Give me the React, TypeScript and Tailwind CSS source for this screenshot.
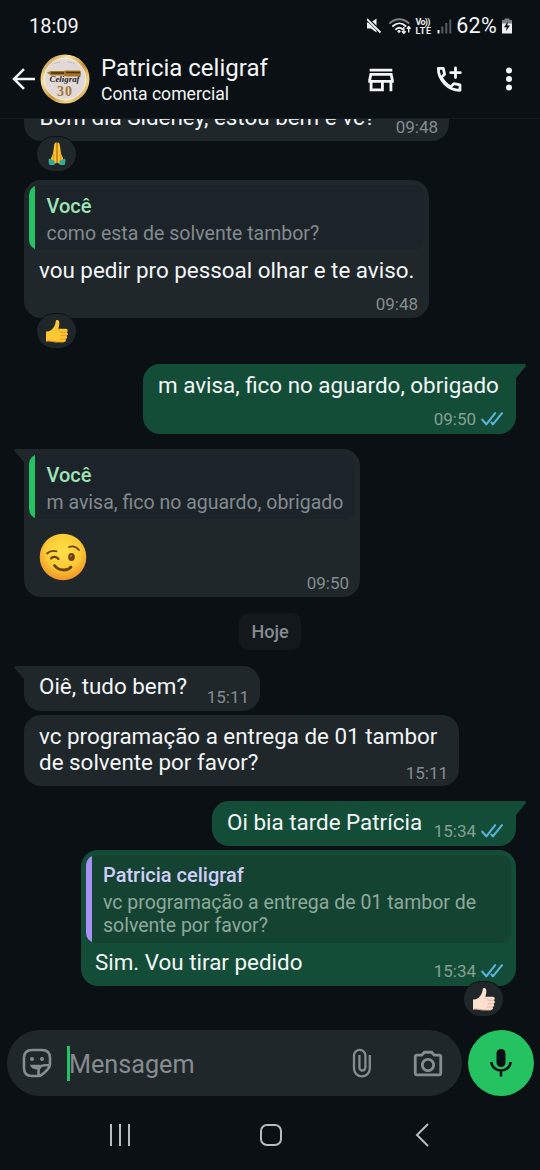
import type { ReactNode } from "react";
import { MdOutlinePhotoCamera, MdOutlineStore } from "react-icons/md";

function Ticks() {
  return (
    <svg viewBox="0 0 24 16" className="ml-[4px] mr-px h-4 w-6 shrink-0" fill="none" stroke="#5ab4dc" strokeWidth="2.1" strokeLinecap="round" strokeLinejoin="round">
      <path d="M2.2 8.6 6.3 13.3 15.2 2.2" />
      <path d="M11.4 11.6 12.9 13.3 22 2.2" />
    </svg>
  );
}

function Time({ children, read }: { children: string; read?: boolean }) {
  return (
    <div className={"flex h-5 items-center text-[17px] leading-5 " + (read ? "text-[#84a092]" : "text-[#868c90]")}>
      <span>{children}</span>
      {read && <Ticks />}
    </div>
  );
}

function Tail({ side }: { side: "left" | "right" }) {
  return side === "right" ? (
    <svg viewBox="0 0 28 17" className="absolute -right-[10px] top-0 h-[17px] w-7" fill="#144d37">
      <path d="M8 0H26.2C28 0 28.5 1.6 27.4 2.8L18 14V17H8Z" />
    </svg>
  ) : (
    <svg viewBox="0 0 28 17" className="absolute -left-[10px] top-0 h-[17px] w-7" fill="#1f272a">
      <path d="M22 0H2.2C.4 0 -.2 1.4 1 2.8L10 13V17H12L22 5Z" />
    </svg>
  );
}

function Bubble({ out, tail, className, children }: { out?: boolean; tail?: boolean; className: string; children: ReactNode }) {
  const corner = tail ? (out ? "rounded-tr-none " : "rounded-tl-none ") : "";
  return (
    <div className={"relative shrink-0 rounded-[17px] text-[22.4px] leading-[27px] whitespace-nowrap text-[#f3f6f7] " + corner + (out ? "self-end bg-[#144d37] " : "self-start bg-[#1f272a] ") + className}>
      {tail && <Tail side={out ? "right" : "left"} />}
      {children}
    </div>
  );
}

function Quote({ own, name, lines }: { own?: boolean; name: string; lines: string[] }) {
  return (
    <div className={"relative flex overflow-hidden rounded-[10px] " + (own ? "bg-[#1c2429]" : "bg-[#154332]")}>
      <div className={"w-[6px] shrink-0 " + (own ? "bg-[#25c262]" : "bg-[#a791f5]")} />
      <div className={"flex flex-col " + (own ? "pb-[5px] pl-[11.5px] pt-[9px]" : "pb-1.5 pl-[11px] pt-2")}>
        <div className={"mb-[3px] text-[20px] leading-[25px] font-medium " + (own ? "text-[#9fe3b8]" : "text-[#d3cdfb]")}>{name}</div>
        {lines.map((l) => (
          <div key={l} className={"text-[19.5px] leading-[23px] whitespace-nowrap " + (own ? "text-[#838a90]" : "text-[#8ea99c]")}>{l}</div>
        ))}
      </div>
    </div>
  );
}

function Thumb({ light }: { light?: boolean }) {
  const a = light ? "#fbe0cf" : "#fdc734";
  const b = light ? "#dfae98" : "#e58f18";
  return (
    <svg viewBox="0 0 24 24" className="size-6">
      <path d="M1 12.5C3.5 13 6.500 11.500 8.500 8.500 10.300 6 10.300 4.500 10.700 2.500 11 .5 13.800 .6 14.200 3 14.600 5.300 14 7.500 13.300 9.700H20.700C23.200 9.700 23.300 12.700 21.600 13.200 23.500 13.800 23.100 16.400 21.400 16.700 22.800 17.500 22.200 19.800 20.600 20 21.500 21.300 20.600 23 18.900 23H11C7.500 23 5.500 21.300 1 22.300Z" fill={a} />
      <path d="M21.600 13.200H16M21.400 16.700H16M20.600 20H15.500M13.300 9.800C13 11 14 12 15 12.200" stroke={b} strokeWidth=".9" fill="none" strokeLinecap="round" />
      <path d="M1 22.300C5.500 21.300 7.500 23 11 23H18.900" stroke={b} strokeWidth="1" fill="none" />
    </svg>
  );
}

function Hands() {
  return (
    <svg viewBox="0 0 24 26" className="h-[26px] w-6">
      <path d="M11.700 1.500C9.900 1.200 9.100 3 9 5L8 12.500 5.500 18.500 8 23 11.700 22ZM12.300 1.500C14.100 1.200 14.900 3 15 5L16 12.500 18.500 18.500 16 23 12.300 22Z" fill="#fdbf2d" />
      <path d="M12 2V20M8.800 13 8 20M15.200 13 16 20" stroke="#e08a17" strokeWidth=".8" />
      <path d="M4 17.500 9.500 19.700V24H4.500C3.500 22 3.200 19.500 4 17.500ZM20 17.500 14.500 19.700V24H19.500C20.500 22 20.800 19.500 20 17.500Z" fill="#35ab98" />
    </svg>
  );
}

function Wink() {
  return (
    <svg viewBox="0 0 48 48" className="size-12">
      <defs>
        <radialGradient id="face" cx=".5" cy=".38" r=".62">
          <stop offset="0" stopColor="#ffe04a" />
          <stop offset=".6" stopColor="#fccb34" />
          <stop offset="1" stopColor="#f0922a" />
        </radialGradient>
      </defs>
      <circle cx="24" cy="24" r="23.300" fill="url(#face)" />
      <g fill="none" stroke="#6b4011" strokeLinecap="round">
        <path d="M8 20.500C10.500 18.300 14 17.500 17.500 18.300" strokeWidth="1.700" />
        <path d="M30 14C33.500 12.700 37.500 14 40 17" strokeWidth="1.700" />
        <path d="M12 25.500C14 23.200 17.500 23.500 19.500 26" strokeWidth="2.200" />
      </g>
      <ellipse cx="32.500" cy="24" rx="3.300" ry="3.900" fill="#6b4011" />
      <circle cx="32" cy="23" r="1" fill="#a9784a" />
      <path d="M15.500 32.500C19.500 37.800 28 38.500 32 34" fill="none" stroke="#6b4011" strokeWidth="2.800" strokeLinecap="round" />
    </svg>
  );
}

function Reaction({ className, children }: { className: string; children: ReactNode }) {
  return (
    <div className={"relative z-10 flex h-[36px] w-[41px] shrink-0 items-center justify-center rounded-full border border-[#0b1014] bg-[#1f272a] " + className}>
      {children}
    </div>
  );
}

function Avatar() {
  return (
    <svg viewBox="0 0 50 50" className="size-[50px] shrink-0">
      <defs>
        <linearGradient id="gold" x1="0" y1="0" x2="1" y2="1">
          <stop offset="0" stopColor="#a86f1c" />
          <stop offset=".3" stopColor="#f7e3a0" />
          <stop offset=".55" stopColor="#c8923a" />
          <stop offset=".75" stopColor="#f3d68a" />
          <stop offset="1" stopColor="#b57d28" />
        </linearGradient>
      </defs>
      <circle cx="25" cy="25" r="24.500" fill="url(#gold)" />
      <circle cx="25" cy="25" r="20.800" fill="#e0d9d7" stroke="#fff6dd" strokeWidth=".8" />
      <path d="M14 9.500 20 8M28 7.800 35 9.500" stroke="#b3aca8" strokeWidth="1" strokeDasharray="1.500 1" />
      <path d="M7 18.500 11 17H24L26 16.500H40Q42 19 40 22.500H26L24 21.500H11Z" fill="#a9741f" />
      <path d="M11 19H24M26 18.500H40" stroke="#4a2f0b" strokeWidth="1.300" />
      <text x="9.500" y="28.300" fontFamily="Liberation Serif, serif" fontStyle="italic" fontWeight="700" fontSize="8" textLength="30" lengthAdjust="spacingAndGlyphs" fill="#29251f">Celigraf</text>
      <text x="17" y="41.500" fontFamily="Liberation Serif, serif" fontWeight="700" fontSize="14" textLength="15" fill="#a5763a">30</text>
    </svg>
  );
}

function StatusIcons() {
  return (
    <svg viewBox="0 0 90 24" className="h-6 w-[90px]" fill="none">
      <path d="M0 8.500H4L9.500 4.500V18.500L4 14.500H0Z" fill="#eceff1" />
      <path d="M.3 5 14 18.500" stroke="#0b1014" strokeWidth="3.500" />
      <path d="M-.2 5 13.500 18.500" stroke="#eceff1" strokeWidth="1.900" />
      <g stroke="#eceff1" strokeWidth="1.900" strokeLinecap="round">
        <path d="M23 9C28.500 4 36 4 41.500 9" stroke="#7b8184" />
        <path d="M26 12C30 8.500 35 8.500 38.500 12" />
        <path d="M29 15.200C31 13.500 33.500 13.500 35.500 15.200" />
      </g>
      <circle cx="32" cy="17.300" r="1.500" fill="#eceff1" />
      <path d="M36.800 13V19M34.900 17.200 36.800 19.300 38.700 17.200M41.700 18.500V13M39.900 14.800 41.700 12.700 43.500 14.800" stroke="#eceff1" strokeWidth="1.400" />
      <g fill="#eceff1" fontFamily="Roboto, sans-serif" fontWeight="700" fontSize="9">
        <text x="48.500" y="11" textLength="15">Vo))</text>
        <text x="48.500" y="19.500" textLength="15.500">LTE</text>
      </g>
      <path d="M71.500 16V19.500" stroke="#eceff1" strokeWidth="2" />
      <path d="M75.300 12.500V19.500M79.300 9V19.500M83.300 5.500V19.500" stroke="#565c60" strokeWidth="2" />
    </svg>
  );
}

export default function App() {
  return (
    <div className="flex h-[1170px] w-[540px] flex-col overflow-hidden bg-[#0b1014] font-['Roboto',sans-serif] text-[#f3f6f7]">
      <div className="flex h-[51px] shrink-0 items-center pl-[29px] pr-[27px]">
        <span className="text-[20px] leading-6">18:09</span>
        <div className="ml-auto flex items-center">
          <StatusIcons />
          <span className="-ml-px text-[21.5px] leading-6 tracking-[0.3px]">62%</span>
          <svg viewBox="0 0 12 18" className="ml-1 h-[18px] w-3">
            <path d="M3.500 1.500H8.500V3H11V7H1V3H3.500Z" fill="#7b8184" />
            <path d="M1 6.500H11V16.500H1Z" fill="#eceff1" />
            <path d="M6.800 4.500 3 10.300H5.700L5 14 9 8.500H6.300Z" fill="#0b1014" />
          </svg>
        </div>
      </div>
      <div className="flex h-[68px] shrink-0 items-center border-b border-[#151a1e] pl-3 pr-[27px] pb-[11px]">
        <svg viewBox="0 0 23 22" className="h-[22px] w-[23px]" fill="none" stroke="#f3f6f7" strokeWidth="2.500">
          <path d="M23 11H2M12 1.200 2 11 12 20.800" />
        </svg>
        <div className="ml-[5px]"><Avatar /></div>
        <div className="ml-[11px] flex flex-col pt-[2px]">
          <span className="text-[24px] leading-7">Patricia celigraf</span>
          <span className="text-[17.6px] leading-6">Conta comercial</span>
        </div>
        <MdOutlineStore className="ml-auto mt-px size-[34px]" />
        <svg viewBox="0 0 34 34" className="ml-[34px] size-[34px]" fill="none" stroke="#f3f6f7" strokeWidth="2.800" strokeLinejoin="round" strokeLinecap="round">
          <path d="M6.300 6.300H11.300L12.600 12.300 9.300 15.500C11.300 19.500 14.500 22.800 18.700 24.900L21.900 21.600 28 22.900V28.300C16.300 28.300 6.300 18 6.300 6.300Z" />
          <path d="M23.500 6V15.500M18.700 10.700H28.300" />
        </svg>
        <svg viewBox="0 0 8 24" className="ml-[39px] h-6 w-2" fill="#f3f6f7">
          <circle cx="4" cy="3.500" r="3" /><circle cx="4" cy="12" r="3" /><circle cx="4" cy="20.500" r="3" />
        </svg>
      </div>

      <div className="flex h-[911px] shrink-0 flex-col overflow-hidden pl-6 pr-6">
        <Bubble className="-mt-[23px] flex h-[45px] w-[425px] items-end justify-between pl-[15.5px] pr-[11px] pb-1">
          <span className="mb-[6px]">Bom dia Sideney, estou bem e vc?</span>
          <Time>09:48</Time>
        </Bubble>
        <Reaction className="ml-3 -mt-[5px]"><Hands /></Reaction>
        <Bubble className="mt-[8px] flex h-[138px] w-[405px] flex-col px-[5px] pt-[5px]">
          <Quote own name="Você" lines={["como esta de solvente tambor?"]} />
          <div className="ml-[10px] mt-[7px]">vou pedir pro pessoal olhar e te aviso.</div>
          <div className="absolute bottom-1 right-[11px]"><Time>09:48</Time></div>
        </Bubble>
        <Reaction className="ml-3 -mt-[5px]"><Thumb /></Reaction>
        <Bubble out tail className="mt-[15px] flex h-[70px] w-[373px] flex-col pl-[15px] pr-[11px] pt-2">
          <div>m avisa, fico no aguardo, obrigado</div>
          <div className="absolute bottom-[5px] right-[11px]"><Time read>09:50</Time></div>
        </Bubble>
        <Bubble tail className="mt-[15px] flex h-[148px] w-[336px] flex-col px-[5px] pt-[5px]">
          <Quote own name="Você" lines={["m avisa, fico no aguardo, obrigado"]} />
          <div className="ml-2.5 mt-[14px]"><Wink /></div>
          <div className="absolute bottom-1 right-[11px]"><Time>09:50</Time></div>
        </Bubble>
        <div className="mt-4 flex h-[37px] w-[62px] shrink-0 items-center justify-center self-center rounded-[9px] bg-[#12181c] text-[18px] font-medium text-[#868c90]">
          Hoje
        </div>
        <Bubble tail className="mt-4 flex h-[45px] w-[236px] items-end justify-between pb-1 pl-[15px] pr-[11px]">
          <span className="relative mb-[7px]">Oiê, tudo bem?</span>
          <Time>15:11</Time>
        </Bubble>
        <Bubble className="mt-1 flex h-[71px] w-[435px] flex-col pl-[15px] pt-2">
          <div className="leading-[26px]">vc programação a entrega de 01 tambor</div>
          <div className="leading-[26px]">de solvente por favor?</div>
          <div className="absolute bottom-[3px] right-[11px]"><Time>15:11</Time></div>
        </Bubble>
        <Bubble out tail className="mt-[15px] flex h-[45px] w-[304px] items-end justify-between pb-[5px] pl-[15px] pr-[11px]">
          <span className="mb-[5px]">Oi bia tarde Patrícia</span>
          <Time read>15:34</Time>
        </Bubble>
        <Bubble out className="mt-1 flex h-[136px] w-[435px] flex-col px-[5px] pt-[5px]">
          <Quote name="Patricia celigraf" lines={["vc programação a entrega de 01 tambor de", "solvente por favor?"]} />
          <div className="ml-[9px] mt-[6px]">Sim. Vou tirar pedido</div>
          <div className="absolute bottom-[5px] right-[11px]"><Time read>15:34</Time></div>
        </Bubble>
        <Reaction className="mr-3 -mt-[5px] self-end"><Thumb light /></Reaction>
      </div>

      <div className="flex h-[66px] shrink-0 items-center gap-1.5 pl-[7px] pr-1.5">
        <div className="flex h-[66px] w-[455px] items-center rounded-full bg-[#1f272a] pl-[15px] pr-[17px] text-[#868c90]">
          <svg viewBox="0 0 30 30" className="size-[30px]" fill="none" stroke="currentColor" strokeWidth="2.600">
            <path d="M28 16.500V10Q28 2 20 2H10Q2 2 2 10V20Q2 28 10 28H15.500Q19 28 22 25L25 22Q28 19 28 16.500Z" strokeLinejoin="round" />
            <path d="M16.500 28V24Q16.500 17.300 23 17.300H28" />
            <path d="M8 16.800H17.500L20 17.500Q17 18.500 16 21.300Q9.500 22 8 16.800Z" fill="currentColor" stroke="none" />
            <circle cx="10" cy="11" r="2" fill="currentColor" stroke="none" /><circle cx="20" cy="11" r="2" fill="currentColor" stroke="none" />
          </svg>
          <div className="ml-[15px] h-[35px] w-[3px] bg-[#25c262]" />
          <span className="-ml-px pt-[3px] text-[25.2px] leading-8">Mensagem</span>
          <svg viewBox="0 0 20 30" className="ml-auto h-[30px] w-5" fill="none" stroke="currentColor" strokeWidth="2.300">
            <path d="M17.800 7V20.500A7.900 7.900 0 0 1 2 20.500V7.500A5.700 5.700 0 0 1 13.400 7.500V19.500A2.800 2.800 0 0 1 7.400 19.500V7" />
          </svg>
          <MdOutlinePhotoCamera className="ml-[39px] mt-[3px] size-[34px]" />
        </div>
        <div className="flex size-[66px] items-center justify-center rounded-full bg-[#25c262]">
          <svg viewBox="0 0 22 28" className="h-7 w-[22px]" fill="none" stroke="#0b1014" strokeWidth="2.500">
            <rect x="6.500" y="0" width="9" height="18" rx="4.500" fill="#0b1014" stroke="none" />
            <path d="M1.500 13A9.500 8.500 0 0 0 20.500 13M11 21V27.500" />
          </svg>
        </div>
      </div>
      <div className="flex h-[78px] shrink-0 items-center pl-[109px]">
        <svg viewBox="0 0 22 22" className="h-[22px] w-[22px]" stroke="#b9bcbe" strokeWidth="2"><path d="M2 0V22M11 0V22M20 0V22" /></svg>
        <svg viewBox="0 0 22 22" className="ml-[129px] h-[22px] w-[22px]" fill="none" stroke="#b9bcbe" strokeWidth="2"><rect x="1" y="1" width="20" height="20" rx="6" /></svg>
        <svg viewBox="0 0 14 24" className="ml-[133px] h-6 w-3.5" fill="none" stroke="#b9bcbe" strokeWidth="2"><path d="M13 1 2 12 13 23" /></svg>
      </div>
    </div>
  );
}
